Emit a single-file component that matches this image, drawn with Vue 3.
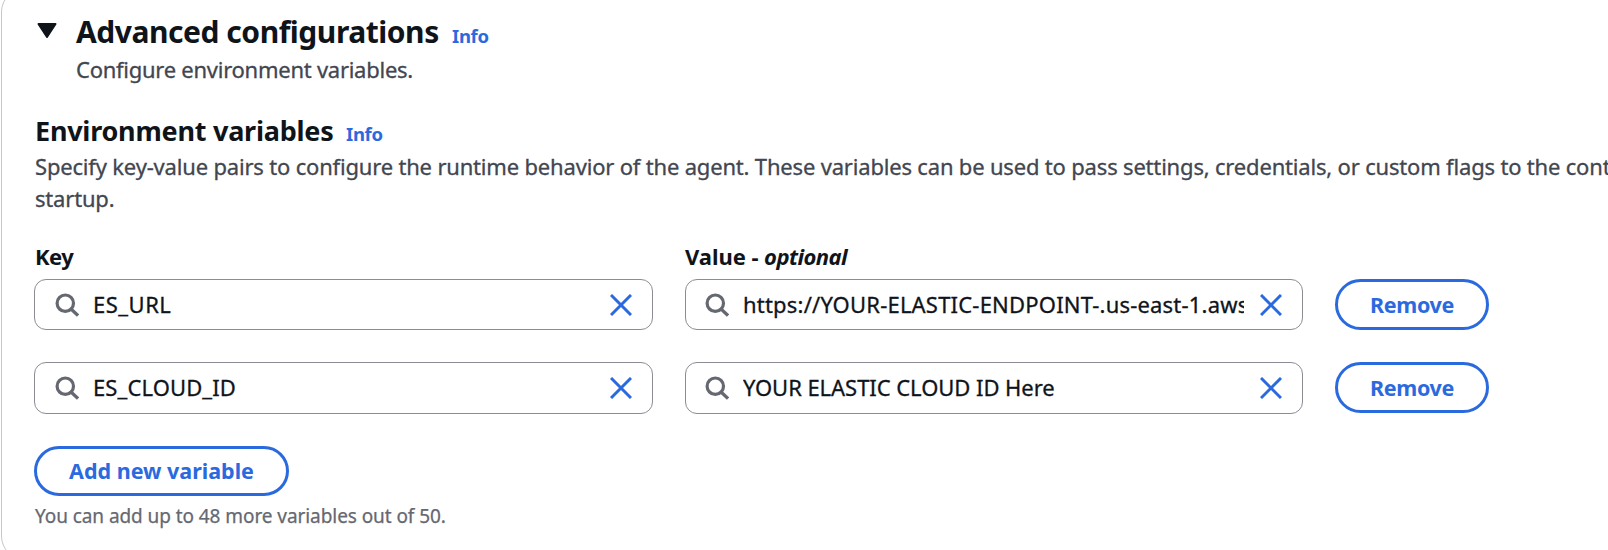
<script setup>
import { ref } from 'vue'

const rows = ref([
  { key: 'ES_URL', value: 'https://YOUR-ELASTIC-ENDPOINT-.us-east-1.aws' },
  { key: 'ES_CLOUD_ID', value: 'YOUR ELASTIC CLOUD ID Here' },
])
</script>

<template>
  <div class="viewport">
    <section class="panel">
      <header class="expander">
        <svg class="caret" width="20" height="16" viewBox="0 0 20 16">
          <path d="M1.5 1h17L10 14z" fill="#0f141a" stroke="#0f141a" stroke-width="2" stroke-linejoin="round" />
        </svg>
        <div>
          <div class="title-line">
            <h2>Advanced configurations</h2>
            <a class="info">Info</a>
          </div>
          <p class="desc t-desc">Configure environment variables.</p>
        </div>
      </header>

      <div class="title-line sub">
        <h3>Environment variables</h3>
        <a class="info">Info</a>
      </div>
      <p class="desc t-long">Specify key-value pairs to configure the runtime behavior of the agent. These variables can be used to pass settings, credentials, or custom flags to the cont<br />startup.</p>

      <div class="labels">
        <label class="l-key">Key</label>
        <label>Value - <i>optional</i></label>
      </div>

      <div v-for="(row, i) in rows" :key="row.key" class="row" :class="'row-' + i">
        <div v-for="field in ['key', 'value']" :key="field" class="input">
          <svg class="search" width="24" height="24" viewBox="0 0 24 24" fill="none" stroke="#656871" stroke-width="3.2">
            <circle cx="10.3" cy="10.2" r="8.2" />
            <path d="M16 16l7 6.6" />
          </svg>
          <span class="text" :class="'t-' + field + '-' + i">{{ row[field] }}</span>
          <svg class="clear" width="22" height="22" viewBox="0 0 22 22" fill="none" stroke="#2b6ade" stroke-width="3">
            <path d="M1 1l20 20M21 1L1 21" />
          </svg>
        </div>
        <button class="btn remove">Remove</button>
      </div>

      <button class="btn add">Add new variable</button>
      <p class="hint">You can add up to 48 more variables out of 50.</p>
    </section>
  </div>
</template>

<style>
body { margin: 0; background: #fff; }
</style>

<style scoped>
.viewport {
  width: 1608px;
  height: 550px;
  overflow: hidden;
  background: #fff;
  font-family: "Noto Sans", "Open Sans", sans-serif;
  color: #0f141a;
}
.panel {
  box-sizing: border-box;
  width: 1700px;
  height: 572px;
  margin-top: -12px;
  padding: 24px 0 0 33px;
  border: 1px solid #c6c6cd;
  border-radius: 24px;
  margin-left: 1px;
}
h2, h3, p { margin: 0; }
.expander { display: flex; gap: 19px; height: 77px; }
.caret { margin: 10px 0 0 2px; flex: none; }
.title-line { display: flex; align-items: baseline; }
h2 { font-size: 30px; line-height: 38px; font-weight: 700; width: 376px; white-space: nowrap; letter-spacing: -0.46px; }
h3 { font-size: 27px; line-height: 36px; font-weight: 700; width: 311px; white-space: nowrap; letter-spacing: -0.24px; }
.info { color: #2b6ade; font-size: 18.5px; font-weight: 700; letter-spacing: -0.3px; }
.desc { color: #424650; font-size: 22px; line-height: 32px; white-space: nowrap; -webkit-text-stroke: 0.3px; }
.t-desc { letter-spacing: -0.26px; margin-top: 2px; }
.t-long { letter-spacing: -0.182px; margin-top: 1px; }
.sub { margin-top: 23px; }
.labels {
  display: grid;
  grid-template-columns: 650px 618px;
  margin: 26px 0 7px;
  font-size: 22px;
  line-height: 32px;
  font-weight: 700;
  letter-spacing: -0.05px;
}
.labels i { letter-spacing: -0.55px; }
.l-key { letter-spacing: -0.5px; }
.row {
  display: flex;
  align-items: flex-start;
  gap: 32px;
  margin-bottom: 32px;
  margin-left: -1px;
}
.input {
  box-sizing: border-box;
  width: 619px;
  height: 51px;
  border: 1px solid #8c8c94;
  border-radius: 12px;
  padding: 0 20px 0 20px;
  display: flex;
  align-items: center;
}
.input + .input { width: 618px; padding-left: 19px; }
.row-1 .input { height: 52px; }
.row-1 .search, .row-1 .clear { margin-bottom: 1px; }
.search { flex: none; margin-right: 14px; }
.text {
  flex: 1;
  min-width: 0;
  overflow: hidden;
  white-space: nowrap;
  font-size: 22px;
  line-height: 32px;
  margin-bottom: 2px;
  -webkit-text-stroke: 0.3px;
}
.t-key-0 { letter-spacing: 0.5px; }
.t-key-1 { letter-spacing: 0.12px; }
.t-value-0 { letter-spacing: 0.2px; }
.t-value-1 { letter-spacing: -0.05px; }
.clear { flex: none; margin-left: 16px; }
.btn {
  box-sizing: border-box;
  display: block;
  height: 51px;
  border: 3px solid #2b6ade;
  border-radius: 26px;
  background: #fff;
  color: #2b6ade;
  font: 700 21.5px/32px "Noto Sans", sans-serif;
  padding: 0;
}
.remove { width: 154px; letter-spacing: -0.3px; }
.add { width: 255px; height: 50px; margin-left: -1px; }
.hint { color: #656871; font-size: 19px; line-height: 26px; margin-top: 7px; letter-spacing: -0.07px; -webkit-text-stroke: 0.25px; }
</style>
